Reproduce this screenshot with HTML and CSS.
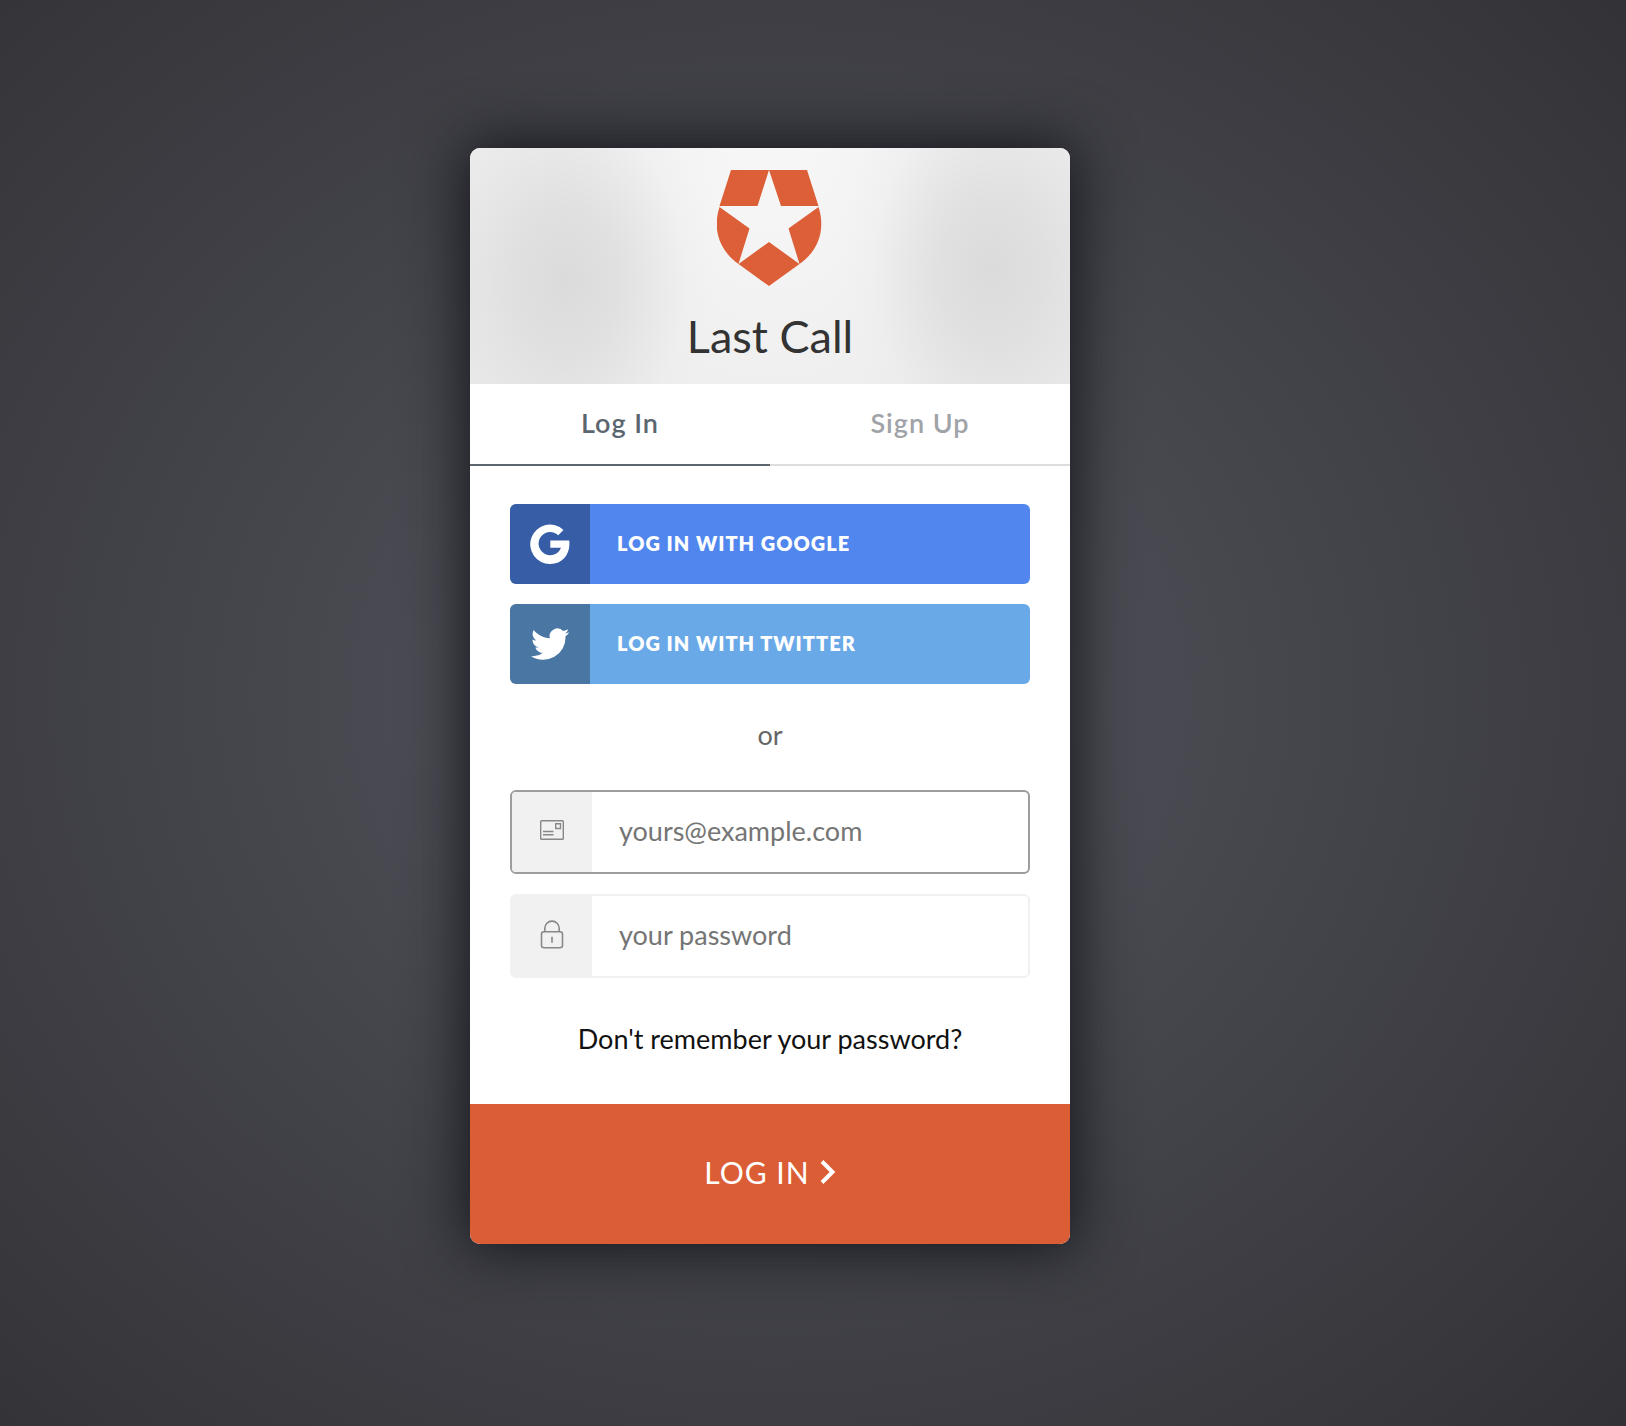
FILE: index.html
```html
<!DOCTYPE html>
<html lang="en">
<head>
<meta charset="utf-8">
<meta name="viewport" content="width=device-width, initial-scale=1">
<title>Last Call</title>
<link rel="stylesheet" href="styles.css">
</head>
<body>
<main class="overlay">
  <section class="card">
    <header class="card-header">
      <svg class="logo" viewBox="0 0 106 116" aria-hidden="true">
        <path fill="#dc5f37" d="M14 0H52L40.500 36H2.500ZM52 0H90L101.500 36H64ZM2.500 37L32.500 58.500L21.500 94C3 81-5 60 2.500 37ZM101.500 37L71.500 58.500L82.500 94C101 81 109 60 101.500 37ZM52 72L82.500 94L52 116L21.500 94Z"/>
      </svg>
      <h1 class="title">Last Call</h1>
    </header>
    <nav class="tabs">
      <a class="tab tab-active" href="#login">Log In</a>
      <a class="tab" href="#signup">Sign Up</a>
    </nav>
    <form class="form">
      <div class="body">
        <div class="stack">
          <button class="social google" type="button">
            <span class="social-icon">
              <svg width="40" height="40" viewBox="0 0 40 40" aria-hidden="true"><path fill="#fff" d="M33.500 6L28.200 11.200A11.600 11.600 0 1 0 31 23.800H20.300V16.500H39.200C41 29.500 33 40 20.500 40A19.700 19.700 0 1 1 33.500 6Z"/></svg>
            </span>
            <span class="social-text">LOG IN WITH GOOGLE</span>
          </button>
          <button class="social twitter" type="button">
            <span class="social-icon">
              <svg width="40" height="40" viewBox="0 0 24 24" aria-hidden="true"><path fill="#fff" d="M23.600 4.900c-.8.400-1.700.6-2.700.8 1-.6 1.700-1.500 2-2.600-.9.500-1.900.9-3 1.100a4.700 4.700 0 0 0-8 4.300C8 8.300 4.500 6.400 2.200 3.600a4.700 4.700 0 0 0 1.500 6.300c-.8 0-1.500-.2-2.200-.6v.1c0 2.300 1.600 4.200 3.800 4.600-.7.200-1.400.2-2.100.1.600 1.900 2.300 3.200 4.400 3.300A9.500 9.500 0 0 1 .6 19.300 13.400 13.400 0 0 0 21.300 7.400c.9-.7 1.700-1.500 2.300-2.500Z"/></svg>
            </span>
            <span class="social-text">LOG IN WITH TWITTER</span>
          </button>
        </div>
        <p class="or">or</p>
        <div class="stack">
          <label class="field field-focused">
            <span class="field-icon">
              <svg width="24" height="30" viewBox="0 0 24 30" fill="none" stroke="#888" aria-hidden="true"><rect x=".7" y="3.700" width="22.600" height="18.600" rx=".8" stroke-width="1.400"/><path stroke-width="1.400" d="M15.700 6.700h4.800v4.800h-4.800zM3 14.500h10.500M3 17.700h10.500"/></svg>
            </span>
            <input class="input" type="email" placeholder="yours@example.com" aria-label="Email">
          </label>
          <label class="field">
            <span class="field-icon">
              <svg width="24" height="32" viewBox="0 0 24 32" fill="none" stroke="#888" stroke-width="1.600" aria-hidden="true"><rect x="1.500" y="11.800" width="21" height="16" rx="2.500"/><path d="M4.800 11.800V8.300a7.200 7.200 0 0 1 14.400 0V11.800M12 16.800v6"/></svg>
            </span>
            <input class="input" type="password" placeholder="your password" aria-label="Password">
          </label>
        </div>
        <a class="forgot" href="#reset">Don't remember your password?</a>
      </div>
      <button class="submit" type="submit">
        <span>LOG IN</span>
        <svg width="16" height="26" viewBox="0 0 16 26" fill="none" stroke="#fff" stroke-width="4" aria-hidden="true"><path d="M2 2.500L12.500 13L2 23.500"/></svg>
      </button>
    </form>
  </section>
</main>
</body>
</html>
```
FILE: styles.css
```css
* {
  box-sizing: border-box;
}

body {
  margin: 0;
  font-family: Lato, sans-serif;
  font-size: 27px;
  line-height: 32px;
}

.overlay {
  min-height: 100vh;
  padding: 148px 86px 148px 0;
  background: radial-gradient(ellipse 1240px 1100px at 770px 696px, #55555f, #303034);
}

.card {
  width: 100%;
  max-width: 600px;
  margin: 0 auto;
  overflow: hidden;
  border-radius: 10px;
  background: #fff;
  box-shadow: 0 0 60px 4px #14151b;
}

.card-header {
  display: flex;
  flex-direction: column;
  align-items: center;
  gap: 22px;
  height: 236px;
  padding-top: 22px;
  background:
    radial-gradient(ellipse 150px 210px at 16% 56%, #dbdbdb, rgba(221, 221, 221, 0.8) 35%, rgba(232, 232, 232, 0.2) 80%, rgba(236, 236, 236, 0)),
    radial-gradient(ellipse 150px 210px at 87% 52%, #dbdbdb, rgba(221, 221, 221, 0.8) 35%, rgba(232, 232, 232, 0.2) 80%, rgba(236, 236, 236, 0)),
    radial-gradient(ellipse 340px 420px at 50% 0, #f6f6f6 10%, #e9e9e9);
}

.logo {
  width: 106px;
  height: 116px;
}

.title {
  margin: 0;
  color: #333;
  font-size: 45px;
  font-weight: 400;
  line-height: 56px;
}

.tabs {
  display: grid;
  grid-template-columns: 1fr 1fr;
}

.tab {
  padding: 23px 0 25px;
  border-bottom: 2px solid #ddd;
  color: #a0a3a8;
  font-weight: 600;
  letter-spacing: 1px;
  text-align: center;
  text-decoration: none;
}

.tab-active {
  border-color: #5c666f;
  color: #5c666f;
}

.body {
  padding: 38px 40px 49px;
}

.stack {
  display: grid;
  gap: 20px;
}

.social {
  display: flex;
  align-items: center;
  height: 80px;
  padding: 0;
  overflow: hidden;
  border: 0;
  border-radius: 6px;
  color: #fff;
  font: 800 20px/32px Lato, sans-serif;
  letter-spacing: 1px;
}

.social-icon {
  display: grid;
  place-items: center;
  width: 80px;
  height: 80px;
  background: rgba(0, 0, 0, 0.3);
}

.social-text {
  padding: 0 0 2px 27px;
}

.google {
  background: #5086ee;
}

.twitter {
  background: #69a9e8;
}

.or {
  margin: 35px 0 39px;
  color: #666;
  text-align: center;
}

.field {
  display: flex;
  height: 84px;
  overflow: hidden;
  border: 2px solid #f1f1f1;
  border-radius: 6px;
}

.field-focused {
  border-color: #9d9d9d;
}

.field-icon {
  display: grid;
  flex: none;
  place-items: center;
  width: 80px;
  background: #f1f1f1;
}

.input {
  flex: 1;
  min-width: 0;
  padding: 0 27px 2px;
  border: 0;
  outline: 0;
  background: transparent;
  font: inherit;
}

.input::placeholder {
  color: #757575;
}

.forgot {
  display: block;
  margin-top: 45px;
  color: #111;
  text-align: center;
  text-decoration: none;
}

.submit {
  display: flex;
  align-items: center;
  justify-content: center;
  gap: 10px;
  width: 100%;
  height: 140px;
  padding: 0 0 4px;
  border: 0;
  background: #db5d36;
  color: #fff;
  font: 400 30px/32px Lato, sans-serif;
  letter-spacing: 1px;
}
```
